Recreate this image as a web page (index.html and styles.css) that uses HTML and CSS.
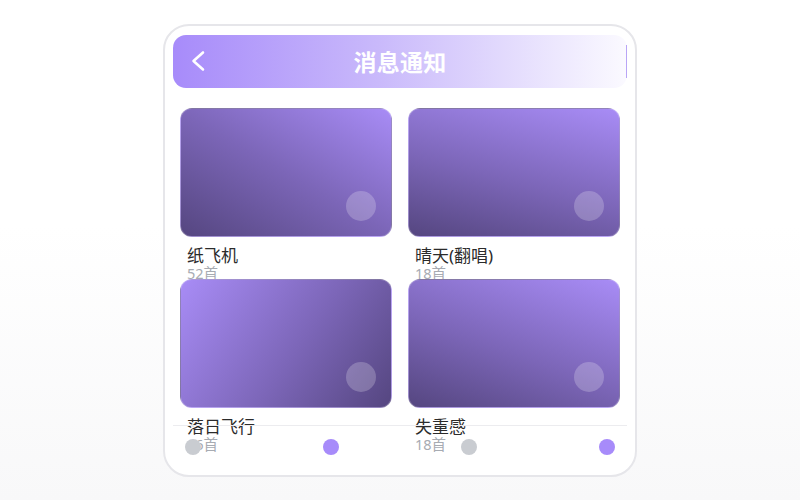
FILE: index.html
```html
<!DOCTYPE html>
<html lang="zh">
<head>
<meta charset="utf-8">
<title>消息通知</title>
<link rel="stylesheet" href="styles.css">
</head>
<body>
<div class="phone">
  <header class="topbar">
    <div class="back">
      <svg width="20" height="24" viewBox="0 0 20 24"><path d="M14 3.5 L4.5 12 L14 20.5" fill="none" stroke="#fff" stroke-width="2.6" stroke-linecap="round" stroke-linejoin="round"/></svg>
    </div>
    <h1 class="title">消息通知</h1>
    <div class="spacer"></div>
  </header>
  <main class="content">
    <div class="grid">
      <div class="item">
        <div class="cover c1"><span class="play"></span></div>
        <div class="name">纸飞机</div>
        <div class="count">52首</div>
      </div>
      <div class="item">
        <div class="cover c2"><span class="play"></span></div>
        <div class="name">晴天(翻唱)</div>
        <div class="count">18首</div>
      </div>
      <div class="item">
        <div class="cover c3"><span class="play"></span></div>
        <div class="name">落日飞行</div>
        <div class="count">16首</div>
      </div>
      <div class="item">
        <div class="cover c4"><span class="play"></span></div>
        <div class="name">失重感</div>
        <div class="count">18首</div>
      </div>
    </div>
  </main>
  <nav class="tabs">
    <span class="dot"></span>
    <span class="dot on"></span>
    <span class="dot"></span>
    <span class="dot on"></span>
  </nav>
</div>
</body>
</html>
```
FILE: styles.css
```css
* { box-sizing: border-box; }
html, body { height: 100%; }
body {
  margin: 0;
  background: linear-gradient(180deg, #ffffff 0%, #ffffff 45%, #f8f8f9 100%);
  font-family: "Noto Sans", "Noto Sans CJK SC", sans-serif;
  display: flex;
  justify-content: center;
  align-items: center;
}
.phone {
  width: 474px;
  height: 453px;
  border: 2px solid #e6e6ea;
  border-radius: 26px;
  background: #fff;
  padding: 9px 8px 6px 8px;
  display: flex;
  flex-direction: column;
}
.topbar {
  height: 53px;
  flex: none;
  border-radius: 13px;
  background: linear-gradient(90deg, #a78bfa 0%, #c9b9fb 45%, #fbfaff 100%);
  display: grid;
  grid-template-columns: 60px 1fr 60px;
  align-items: center;
}
.back { display: flex; align-items: center; padding-left: 16px; }
.back svg { display: block; }
.title {
  margin: 0;
  text-align: center;
  color: #fff;
  font-size: 23px;
  font-weight: 700;
  letter-spacing: 0.3px;
}
.spacer {
  height: 33px;
  border-right: 1px solid #b9a5f6;
}
.content {
  flex: 1;
  min-height: 0;
  padding: 20px 7px 0 7px;
}
.grid {
  display: grid;
  grid-template-columns: 1fr 1fr;
  grid-auto-rows: 155px;
  column-gap: 16px;
  row-gap: 16px;
}
.item { min-width: 0; }
.cover {
  height: 129px;
  border-radius: 12px;
  border: 1px solid rgba(255,255,255,0.25);
  display: flex;
  justify-content: flex-end;
  align-items: flex-end;
  padding: 0 15px 15px 0;
  position: relative;
  z-index: 1;
}
.c1 { background: linear-gradient(30deg, #554680 0%, #7c66b8 50%, #a88cf6 100%); }
.c2 { background: linear-gradient(15deg, #554680 0%, #7c66b8 45%, #a88cf6 100%); }
.c3 { background: linear-gradient(125deg, #a88cf6 0%, #7c66b8 55%, #554680 100%); }
.c4 { background: linear-gradient(20deg, #554680 0%, #7c66b8 45%, #a88cf6 100%); }
.play {
  width: 30px;
  height: 30px;
  border-radius: 50%;
  background: rgba(255,255,255,0.22);
}
.name {
  margin-top: 10px;
  padding-left: 7px;
  font-size: 17px;
  line-height: 18px;
  color: #2b2b2b;
  white-space: nowrap;
}
.count {
  padding-left: 7px;
  font-size: 14.5px;
  line-height: 16px;
  color: #a7abb2;
}
.tabs {
  flex: none;
  height: 44px;
  border-top: 1px solid #ececef;
  padding: 0 12px;
  display: flex;
  justify-content: space-between;
  align-items: center;
  position: relative;
  z-index: 2;
}
.dot {
  width: 16px;
  height: 16px;
  border-radius: 50%;
  background: #c9ccd1;
}
.dot.on { background: #a78bfa; }
```
